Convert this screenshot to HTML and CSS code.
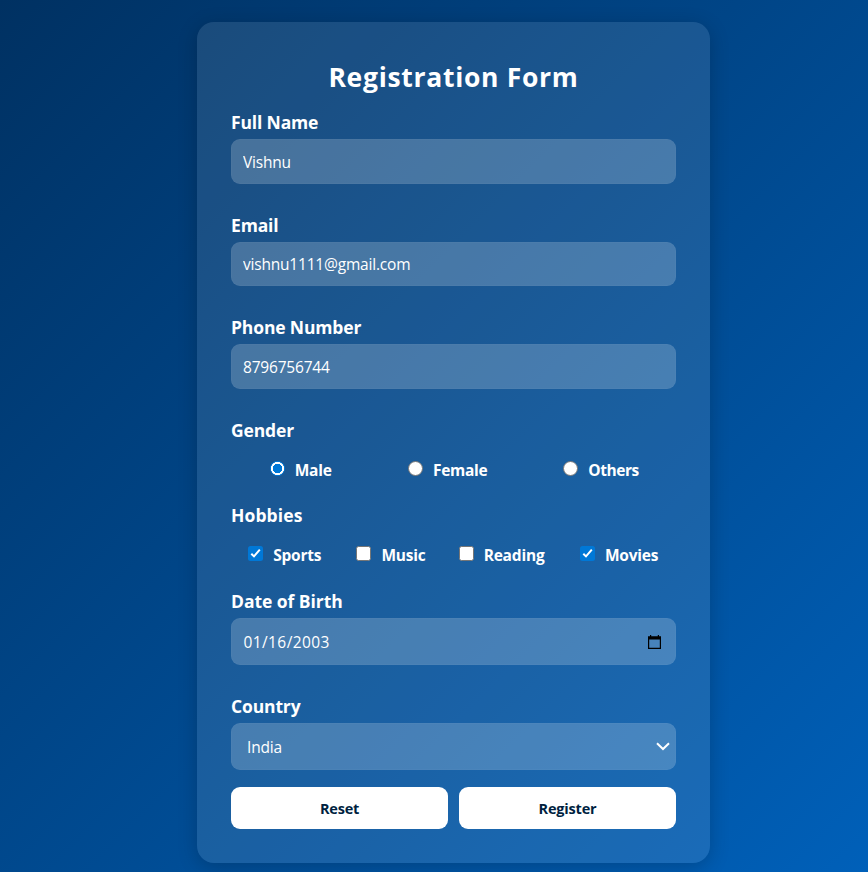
FILE: index.html
```html
<!DOCTYPE html>
<html lang="en">
<head>
<meta charset="UTF-8">
<title>Registration Form</title>
<link rel="stylesheet" href="styles.css">
</head>
<body>
<form class="card">
  <h1>Registration Form</h1>
  <div class="field"><label for="name">Full Name</label><input class="control" id="name" type="text" value="Vishnu"></div>
  <div class="field"><label for="email">Email</label><input class="control" id="email" type="text" value="vishnu1111@gmail.com"></div>
  <div class="field"><label for="phone">Phone Number</label><input class="control" id="phone" type="text" value="8796756744"></div>
  <div class="group">
    <div class="caption">Gender</div>
    <div class="options">
      <label class="option male"><input type="radio" name="gender" checked>Male</label>
      <label class="option female"><input type="radio" name="gender">Female</label>
      <label class="option others"><input type="radio" name="gender">Others</label>
    </div>
  </div>
  <div class="group">
    <div class="caption hobbies">Hobbies</div>
    <div class="options">
      <label class="option sports"><span class="check on"><svg viewBox="0 0 15 15"><path d="M3.3 7.7 6 10.4 11.8 3.7"/></svg></span>Sports</label>
      <label class="option music"><span class="check"></span>Music</label>
      <label class="option reading"><span class="check"></span>Reading</label>
      <label class="option movies"><span class="check on"><svg viewBox="0 0 15 15"><path d="M3.3 7.7 6 10.4 11.8 3.7"/></svg></span>Movies</label>
    </div>
  </div>
  <div class="field tall"><div class="caption birth">Date of Birth</div>
    <div class="control date"><span>01/16/2003</span><svg class="calendar" viewBox="0 0 13 14"><path fill-rule="evenodd" d="M0 1.2h2V0h1.2v1.2h6.6V0H11v1.2h2V14H0zM1.2 4.6v8.2h10.6V4.6z"/></svg></div>
  </div>
  <div class="field tall country"><div class="caption">Country</div>
    <div class="control select"><span>India</span><svg class="chevron" viewBox="0 0 14 9"><path d="M1 1.2 7 7 13 1.2"/></svg></div>
  </div>
  <div class="actions"><button type="reset">Reset</button><button type="button" class="register">Register</button></div>
</form>
</body>
</html>
```
FILE: styles.css
```css
* { box-sizing: border-box; }
html { height: 100%; }
body {
  margin: 0;
  height: 872px;
  overflow: hidden;
  padding-top: 22px;
  font-family: "Open Sans", "Noto Sans", sans-serif;
  color: #fff;
  background: linear-gradient(135deg, #003162, #0060b9);
}
.card {
  width: 513px;
  height: 841px;
  margin-left: 197px;
  padding: 34px;
  border-radius: 17px;
  background: rgba(255, 255, 255, 0.1);
  box-shadow: 0 4px 20px rgba(0, 0, 0, 0.2);
}
h1 {
  margin: 0;
  height: 54px;
  font-size: 26.5px;
  line-height: 42px;
  font-weight: 700;
  letter-spacing: 0.7px;
  text-align: center;
}
.field { height: 102.6px; }
.field label, .caption {
  display: block;
  height: 29px;
  line-height: 25px;
  font-size: 17.5px;
  font-weight: 700;
  letter-spacing: -0.15px;
}
.caption.hobbies { letter-spacing: 0.1px; }
.caption.birth { letter-spacing: -0.05px; }
.control {
  display: flex;
  align-items: center;
  width: 445px;
  height: 44.6px;
  padding: 1px 11px 0;
  border: 1px solid rgba(255, 255, 255, 0.02);
  border-radius: 9px;
  background: rgba(255, 255, 255, 0.2);
  color: #fff;
  font: 15.5px "Open Sans", "Noto Sans", sans-serif;
  letter-spacing: -0.2px;
  outline: none;
}
.group { height: 85.5px; }
.options {
  display: flex;
  justify-content: space-around;
  padding-top: 12px;
}
.option {
  display: flex;
  gap: 10px;
  height: 25px;
  font-size: 15.5px;
  line-height: 23px;
  font-weight: 700;
  letter-spacing: -0.2px;
  white-space: nowrap;
}
.male { width: 61px; }
.female { width: 78px; letter-spacing: -0.3px; }
.others { width: 74px; letter-spacing: -0.45px; }
.sports { width: 74px; }
.music { width: 68px; }
.reading { width: 87px; }
.movies { width: 79px; }
.option input {
  appearance: none;
  flex: none;
  width: 15px;
  height: 15px;
  margin: 2px 0 0;
  border: 1px solid #767676;
  border-radius: 50%;
  background: #fff;
}
.option input:checked {
  border: 0;
  background: radial-gradient(circle, #0078d7 4.5px, #fff 5px 6.3px, #0078d7 6.8px);
}
.check {
  flex: none;
  width: 15px;
  height: 15px;
  margin-top: 2px;
  border: 1px solid #767676;
  border-radius: 2.5px;
  background: #fff;
}
.check.on { border: 0; background: #0078d7; }
.check svg { display: block; width: 15px; height: 15px; fill: none; stroke: #fff; stroke-width: 2; }
.tall { height: 105px; }
.tall .control { height: 47px; justify-content: space-between; }
.control.date { padding: 1px 14px 0 11.5px; letter-spacing: 0.4px; }
.date svg { width: 13px; height: 14px; fill: #000; }
.control.select { padding: 1px 5px 0 15px; }
.select svg { width: 14px; height: 9px; fill: none; stroke: #fff; stroke-width: 2; }
.country { height: 93px; }
.actions { display: grid; grid-template-columns: 1fr 1fr; gap: 11px; }
button {
  height: 42px;
  padding: 1px 0 0;
  border: 0;
  border-radius: 9px;
  background: #fff;
  color: #001f3f;
  font: 700 14.5px "Open Sans", "Noto Sans", sans-serif;
  letter-spacing: -0.2px;
}
```
